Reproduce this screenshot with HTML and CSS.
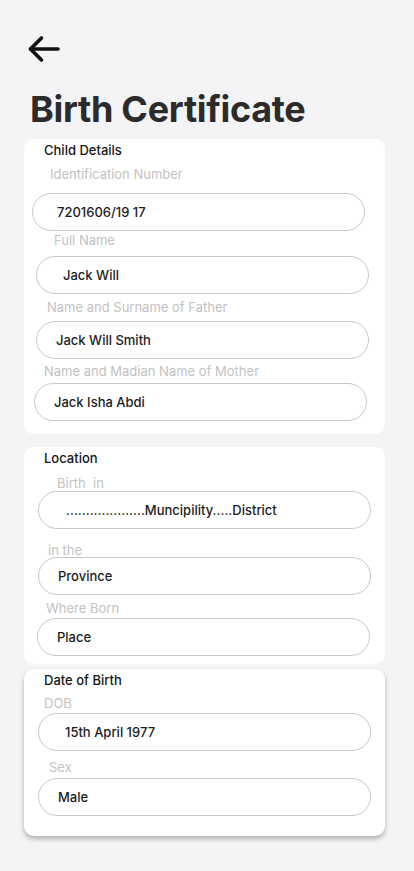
FILE: index.html
```html
<!DOCTYPE html>
<html lang="en">
<head>
<meta charset="utf-8">
<title>Birth Certificate</title>
<link rel="stylesheet" href="styles.css">
</head>
<body>
<div class="page">
  <div class="back">
    <svg width="34" height="28" viewBox="0 0 34 28" fill="none" stroke="#111" stroke-width="3.6" stroke-linecap="round" stroke-linejoin="round">
      <path d="M31 14 H3.5"/>
      <path d="M14.5 3 L3.5 14 L14.5 25"/>
    </svg>
  </div>
  <h1 class="title">Birth Certificate</h1>

  <section class="card card-child">
    <h2 class="card-title">Child Details</h2>
    <div class="label l1 lx26">Identification Number</div>
    <div class="field f1 fx8 px25">7201606/19 17</div>
    <div class="label l2 lx30">Full Name</div>
    <div class="field f2 fx12 px27">Jack Will</div>
    <div class="label l3 lx23">Name and Surname of Father</div>
    <div class="field f3 fx12 px20">Jack Will Smith</div>
    <div class="label l4 lx20">Name and Madian Name of Mother</div>
    <div class="field f4 fx10 px20">Jack Isha Abdi</div>
  </section>

  <section class="card card-location">
    <h2 class="card-title">Location</h2>
    <div class="label l5 lx33">Birth&nbsp; in</div>
    <div class="field f5 fx14 px28">....................Muncipility.....District</div>
    <div class="label l6 lx24">in the</div>
    <div class="field f6 fx14 px20">Province</div>
    <div class="label l7 lx22">Where Born</div>
    <div class="field f7 fx13 px20">Place</div>
  </section>

  <section class="card card-dob">
    <h2 class="card-title">Date of Birth</h2>
    <div class="label l8 lx20">DOB</div>
    <div class="field f8 fx14 px27">15th April 1977</div>
    <div class="label l9 lx25">Sex</div>
    <div class="field f9 fx14 px20">Male</div>
  </section>
</div>
</body>
</html>
```

FILE: styles.css
```css
* { box-sizing: border-box; }
html, body { margin: 0; padding: 0; }
body {
  background: #f4f4f6;
  font-family: Inter, "Noto Sans", sans-serif;
  color: #1e1e1e;
  width: 414px;
  height: 871px;
  overflow: hidden;
}
.page { padding-top: 35px; }
.back { margin-left: 27px; height: 28px; }
.back svg { display: block; }
.title {
  margin: 24px 0 0 30px;
  font-size: 36px;
  line-height: 44px;
  font-weight: 700;
  color: #2b2b2b;
  letter-spacing: -0.3px;
}
.card {
  background: #fff;
  width: 361px;
  margin-left: 24px;
  border-radius: 10px;
  padding-top: 3px;
}
.card-child { margin-top: 8px; padding-bottom: 13px; }
.card-location { margin-top: 13px; padding-bottom: 8px; }
.card-dob { margin-top: 5px; padding-bottom: 20px; box-shadow: 0 3px 5px rgba(0,0,0,0.28); }
.card-title {
  margin: 0 0 0 20px;
  font-size: 13px;
  line-height: 16px;
  font-weight: 500;
  color: #161616;
}
.label {
  font-size: 13px;
  line-height: 14px;
  color: #c2c2c2;
}
.field {
  width: 333px;
  height: 38px;
  border: 1px solid #c9c9c9;
  border-radius: 19px;
  font-size: 13px;
  font-weight: 500;
  line-height: 36px;
  color: #1c1c1c;
}
/* vertical rhythm */
.l1 { margin-top: 9px; }
.f1 { margin-top: 12px; }
.l2 { margin-top: 2px; }
.f2 { margin-top: 9px; }
.l3 { margin-top: 6px; }
.f3 { margin-top: 7px; }
.l4 { margin-top: 5px; }
.f4 { margin-top: 5px; }
.l5 { margin-top: 10px; }
.f5 { margin-top: 1px; }
.l6 { margin-top: 14px; }
.f6 { margin-top: 0; }
.l7 { margin-top: 6px; }
.f7 { margin-top: 3px; }
.l8 { margin-top: 8px; }
.f8 { margin-top: 3px; }
.l9 { margin-top: 9px; }
.f9 { margin-top: 4px; }
/* horizontal indents */
.lx20 { margin-left: 20px; }
.lx22 { margin-left: 22px; }
.lx23 { margin-left: 23px; }
.lx24 { margin-left: 24px; }
.lx25 { margin-left: 25px; }
.lx26 { margin-left: 26px; }
.lx30 { margin-left: 30px; }
.lx33 { margin-left: 33px; }
.fx8 { margin-left: 8px; }
.fx10 { margin-left: 10px; }
.fx12 { margin-left: 12px; }
.fx13 { margin-left: 13px; }
.fx14 { margin-left: 14px; }
.px20 { padding-left: 19px; }
.px25 { padding-left: 24px; }
.px27 { padding-left: 26px; }
.px28 { padding-left: 27px; }
```
